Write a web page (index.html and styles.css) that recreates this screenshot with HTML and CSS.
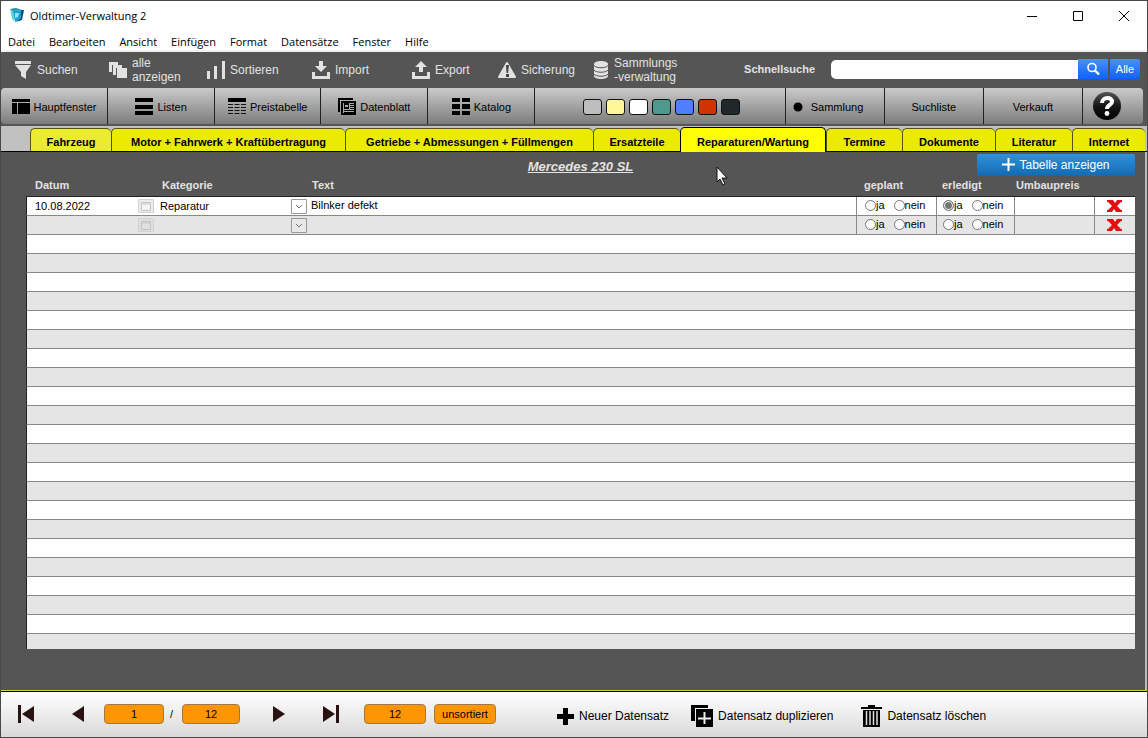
FILE: index.html
```html
<!DOCTYPE html>
<html lang="de">
<head>
<meta charset="utf-8">
<title>Oldtimer-Verwaltung 2</title>
<link rel="stylesheet" href="styles.css">
</head>
<body>
<div class="window">
  <header class="titlebar">
    <svg class="app-icon" width="16" height="16" viewBox="0 0 16 16"><path d="M1 1l2 10 2 2L5 3z" fill="#63d9dc"/><path d="M4 3l9-1-1 9-6 3z" fill="#18a0d8"/><path d="M1 1l6-1 6 2-9 1z" fill="#1d8f9c"/><path d="M12 2l3 0-2 10-6 2 5-4z" fill="#0a4c7c"/><path d="M6 5l4 0-1 4-3 1z" fill="#8fe9f8"/></svg>
    <span class="title">Oldtimer-Verwaltung 2</span>
    <div class="window-buttons">
      <button aria-label="Minimieren"><svg width="12" height="12" viewBox="0 0 12 12"><path d="M1 6.500h10" stroke="#000"/></svg></button>
      <button aria-label="Maximieren"><svg width="12" height="12" viewBox="0 0 12 12"><path d="M1.500 1.500h9v9h-9z" fill="none" stroke="#000"/></svg></button>
      <button aria-label="Schließen"><svg width="12" height="12" viewBox="0 0 12 12"><path d="M1 1l10 10M11 1L1 11" stroke="#000"/></svg></button>
    </div>
  </header>
  <nav class="menubar">
    <button>Datei</button><button>Bearbeiten</button><button>Ansicht</button><button>Einfügen</button><button>Format</button><button>Datensätze</button><button>Fenster</button><button>Hilfe</button>
  </nav>

  <div class="toolbar">
    <button class="tool"><svg width="18" height="18" viewBox="0 0 18 18" fill="#e2e2e2"><path d="M1 0h16v3H1zM1 4h16l-5 7v7l-5-3v-4z"/></svg><span>Suchen</span></button>
    <button class="tool"><svg width="18" height="18" viewBox="0 0 18 18" fill="#e2e2e2"><path d="M0 1h9v3H3v7H0zM4 4h9v3H7v7H4zM8 7h10v10H8z"/></svg><span>alle<br>anzeigen</span></button>
    <button class="tool"><svg width="18" height="18" viewBox="0 0 18 18" fill="#e2e2e2"><path d="M0 10h3v8H0zM7 5h3v13H7zM15 0h3v18h-3z"/></svg><span>Sortieren</span></button>
    <button class="tool"><svg width="18" height="18" viewBox="0 0 18 18" fill="#e2e2e2"><path d="M7 0h4v5h4l-6 6-6-6h4zM0 11h3v4h12v-4h3v7H0z"/></svg><span>Import</span></button>
    <button class="tool"><svg width="18" height="18" viewBox="0 0 18 18" fill="#e2e2e2"><path d="M7 11h4V6h4L9 0 3 6h4zM0 11h3v4h12v-4h3v7H0z"/></svg><span>Export</span></button>
    <button class="tool"><svg width="18" height="18" viewBox="0 0 18 18"><path d="M9 2l8 14H1z" fill="#e2e2e2" stroke="#e2e2e2" stroke-width="2" stroke-linejoin="round"/><path d="M8 4h3l-1 8H8.500zM8 13h3v3H8z" fill="#444"/></svg><span>Sicherung</span></button>
    <button class="tool stack"><svg width="16" height="18" viewBox="0 0 16 18"><path d="M1 3v12c0 4 14 4 14 0V3c0-4-14-4-14 0z" fill="#e2e2e2"/><path d="M1 4.500c2 3 12 3 14 0M1 9c2 3 12 3 14 0M1 13c2 3 12 3 14 0" fill="none" stroke="#555"/></svg><span>Sammlungs<br>-verwaltung</span></button>
    <form class="quicksearch">
      <label for="q">Schnellsuche</label>
      <input id="q" type="text">
      <button type="button" class="blue find" aria-label="Suchen"><svg width="14" height="14" viewBox="0 0 14 14" fill="none" stroke="#fff"><circle cx="6" cy="5.500" r="4" stroke-width="1.600"/><path d="M9 8.500l4 4" stroke-width="2.400"/></svg></button>
      <button type="button" class="blue all">Alle</button>
    </form>
  </div>

  <div class="views">
    <button><svg width="18" height="18" viewBox="0 0 18 18"><path d="M0 1h18v3H0zM0 5h5v11H0zM6 5h12v11H6z"/></svg>Hauptfenster</button>
    <button><svg width="18" height="18" viewBox="0 0 18 18"><path d="M0 0h18v4H0zM0 7h18v4H0zM0 13h18v4H0z"/></svg>Listen</button>
    <button><svg width="18" height="18" viewBox="0 0 18 18"><path d="M0 0h18v4H0z"/><path d="M0 6.500h18M0 9.500h18M0 12.500h18M0 15.500h18" stroke="#111" stroke-dasharray="5 1.500"/></svg>Preistabelle</button>
    <button><svg width="18" height="18" viewBox="0 0 18 18"><path d="M0 0h15v2H2v12H0z"/><path d="M4 4h13v12H4z" fill="#aaa" stroke="#000" stroke-width="2"/><path d="M6 5h5v6H6zM12 6h4v1h-4zM12 8h4v1h-4zM12 10h4v1h-4zM6 12h10v1H6zM6 14h10v1H6z"/><path d="M7 7h3v2H7z" fill="#aaa"/></svg>Datenblatt</button>
    <button><svg width="18" height="18" viewBox="0 0 18 18"><path d="M0 0h8v4H0zM10 0h8v4h-8zM0 6h8v5H0zM10 6h8v5h-8zM0 13h8v4H0zM10 13h8v4h-8z"/></svg>Katalog</button>
    <div class="swatches">
      <button class="silver" aria-label="Silber"></button><button class="cream" aria-label="Gelb"></button><button class="white" aria-label="Weiß"></button><button class="teal" aria-label="Türkis"></button><button class="azure" aria-label="Blau"></button><button class="red" aria-label="Rot"></button><button class="black" aria-label="Schwarz"></button>
    </div>
    <button class="active-list"><svg width="10" height="10" viewBox="0 0 10 10"><circle cx="5" cy="5" r="4.500"/></svg>Sammlung</button>
    <button>Suchliste</button>
    <button>Verkauft</button>
    <button class="help" aria-label="Hilfe"><svg width="28" height="28" viewBox="0 0 28 28"><defs><linearGradient id="ball" x2="0" y2="1"><stop offset="0" stop-color="#555"/><stop offset=".5" stop-color="#151515"/><stop offset="1" stop-color="#000"/></linearGradient></defs><circle cx="14" cy="14" r="14" fill="url(#ball)"/><path d="M9 11c0-7 11-6 10-1 0 3-5 3-5 7" fill="none" stroke="#fff" stroke-width="4"/><circle cx="14" cy="21.500" r="2.400" fill="#fff"/></svg></button>
  </div>

  <nav class="tabs">
    <button class="light">Fahrzeug</button>
    <button>Motor + Fahrwerk + Kraftübertragung</button>
    <button>Getriebe + Abmessungen + Füllmengen</button>
    <button>Ersatzteile</button>
    <button class="current">Reparaturen/Wartung</button>
    <button>Termine</button>
    <button>Dokumente</button>
    <button>Literatur</button>
    <button>Internet</button>
  </nav>

  <main class="content">
    <div class="heading">
      <h1>Mercedes 230 SL</h1>
      <button class="show-table"><svg width="13" height="13" viewBox="0 0 13 13"><path d="M6.500 0v13M0 6.500h13" stroke="#fff" stroke-width="2"/></svg>Tabelle anzeigen</button>
    </div>
    <table class="records">
      <colgroup><col class="c-date"><col class="c-cat"><col><col class="c-plan"><col class="c-done"><col class="c-price"><col class="c-del"></colgroup>
      <thead><tr><th>Datum</th><th>Kategorie</th><th>Text</th><th>geplant</th><th>erledigt</th><th colspan="2">Umbaupreis</th></tr></thead>
      <tbody>
        <tr>
          <td><div class="date"><input type="text" aria-label="Datum" value="10.08.2022"><button aria-label="Kalender"><svg width="16" height="14" viewBox="0 0 16 14"><path d="M.5.5h15v13H.5z" fill="#ececec" stroke="#d2d2d2"/><path d="M3.500 3.500h9v8h-9zM3 5h10" fill="#f4f4f4" stroke="#c4c4c4"/></svg></button></div></td>
          <td><div class="pick"><select aria-label="Kategorie"><option>Reparatur</option></select><svg width="16" height="15" viewBox="0 0 16 15"><path d="M.5.5h15v14H.5z" fill="#fff" stroke="#999"/><path d="M5 6l3 3 3-3" fill="none" stroke="#777"/></svg></div></td>
          <td><input type="text" aria-label="Text" value="Bilnker defekt"></td>
          <td class="line"><div class="choice"><label><input type="radio" name="p1">ja</label><label><input type="radio" name="p1">nein</label></div></td>
          <td class="line"><div class="choice"><label><input type="radio" name="d1" checked>ja</label><label><input type="radio" name="d1">nein</label></div></td>
          <td class="line"><input type="text" aria-label="Umbaupreis"></td>
          <td class="line del"><button aria-label="Löschen"><svg width="15" height="12" viewBox="0 0 15 12"><path d="M0 0h6l2 3 2-3h5v2h-1l-4 4 4 4h1v2H9L7 9l-2 3H0v-2h1l4-4-4-4H0z" fill="#e01010"/></svg></button></td>
        </tr>
        <tr>
          <td><div class="date"><input type="text" aria-label="Datum"><button aria-label="Kalender"><svg width="16" height="14" viewBox="0 0 16 14"><path d="M.5.5h15v13H.5z" fill="#dedede" stroke="#d2d2d2"/><path d="M3.500 3.500h9v8h-9zM3 5h10" fill="#e0e0e0" stroke="#c4c4c4"/></svg></button></div></td>
          <td><div class="pick"><select aria-label="Kategorie"><option></option></select><svg width="16" height="15" viewBox="0 0 16 15"><path d="M.5.5h15v14H.5z" fill="#e8e8e8" stroke="#999"/><path d="M5 6l3 3 3-3" fill="none" stroke="#777"/></svg></div></td>
          <td><input type="text" aria-label="Text"></td>
          <td class="line"><div class="choice"><label><input type="radio" name="p2">ja</label><label><input type="radio" name="p2">nein</label></div></td>
          <td class="line"><div class="choice"><label><input type="radio" name="d2">ja</label><label><input type="radio" name="d2">nein</label></div></td>
          <td class="line"><input type="text" aria-label="Umbaupreis"></td>
          <td class="line del"><button aria-label="Löschen"><svg width="15" height="12" viewBox="0 0 15 12"><path d="M0 0h6l2 3 2-3h5v2h-1l-4 4 4 4h1v2H9L7 9l-2 3H0v-2h1l4-4-4-4H0z" fill="#e01010"/></svg></button></td>
        </tr>
        <tr><td colspan="7"></td></tr><tr><td colspan="7"></td></tr><tr><td colspan="7"></td></tr><tr><td colspan="7"></td></tr>
        <tr><td colspan="7"></td></tr><tr><td colspan="7"></td></tr><tr><td colspan="7"></td></tr><tr><td colspan="7"></td></tr>
        <tr><td colspan="7"></td></tr><tr><td colspan="7"></td></tr><tr><td colspan="7"></td></tr><tr><td colspan="7"></td></tr>
        <tr><td colspan="7"></td></tr><tr><td colspan="7"></td></tr><tr><td colspan="7"></td></tr><tr><td colspan="7"></td></tr>
        <tr><td colspan="7"></td></tr><tr><td colspan="7"></td></tr><tr><td colspan="7"></td></tr><tr><td colspan="7"></td></tr>
        <tr><td colspan="7"></td></tr><tr class="cut"><td colspan="7"></td></tr>
      </tbody>
    </table>
  </main>

  <footer class="footer">
    <div class="pager">
      <button aria-label="Erster"><svg width="16" height="18" viewBox="0 0 16 18" fill="#2a1212"><path d="M0 0h3v18H0zM16 1v16L4 9z"/></svg></button>
      <button aria-label="Zurück"><svg width="16" height="18" viewBox="0 0 16 18" fill="#2a1212"><path d="M14 1v16L2 9z"/></svg></button>
      <div class="position"><input type="text" aria-label="Datensatz" value="1"><span>/</span><output>12</output></div>
      <button aria-label="Weiter"><svg width="16" height="18" viewBox="0 0 16 18" fill="#2a1212"><path d="M2 1v16l12-8z"/></svg></button>
      <button aria-label="Letzter"><svg width="16" height="18" viewBox="0 0 16 18" fill="#2a1212"><path d="M13 0h3v18h-3zM0 1v16l12-8z"/></svg></button>
    </div>
    <div class="status"><output>12</output><output>unsortiert</output></div>
    <div class="actions">
      <button><svg width="17" height="17" viewBox="0 0 17 17"><path d="M6 0h5v6h6v5h-6v6H6v-6H0V6h6z"/></svg>Neuer Datensatz</button>
      <button><svg width="22" height="22" viewBox="0 0 22 22"><path d="M0 0h17v3H4v13H0z"/><path d="M5 4h17v18H5z"/><path d="M13.500 7v12M7 13.500h13" stroke="#eee" stroke-width="2"/></svg>Datensatz duplizieren</button>
      <button><svg width="21" height="22" viewBox="0 0 21 22"><path d="M7 0h7v2h7v2H0V2h7zM2 5h17v17H2z"/><path d="M5.500 6v14M9 6v14M12.500 6v14M16 6v14" stroke="#ddd" stroke-width="1.500"/></svg>Datensatz löschen</button>
    </div>
  </footer>
  <svg class="pointer" width="13" height="20" viewBox="0 0 13 20"><path d="M1 1v15l3-3 3 6 2-1-3-6h5z" fill="#fff" stroke="#111"/></svg>
</div>
</body>
</html>
```
FILE: styles.css
```css
* { box-sizing: border-box; }
body {
  margin: 0;
  font: 11px/14px "Liberation Sans", Arial, sans-serif;
  color: #000;
}
button, input, select {
  font: inherit;
  color: inherit;
  background: none;
  border: 0;
  margin: 0;
  padding: 0;
}
svg { display: block; flex: none; }
.window {
  position: relative;
  display: flex;
  flex-direction: column;
  min-height: 100vh;
  border: 1px solid #484846;
  background: #555;
}

.titlebar {
  display: flex;
  align-items: center;
  gap: 5px;
  height: 29px;
  padding-left: 8px;
  background: #fff;
  font: 11px/16px "Open Sans", "Noto Sans", sans-serif;
}
.window-buttons { display: flex; margin-left: auto; }
.window-buttons button { display: grid; place-items: center; width: 46px; height: 28px; }
.menubar {
  display: flex;
  height: 22px;
  background: #fff;
  border-bottom: 2px solid #f0f0f0;
  font: 11px/20px "Open Sans", "Noto Sans", sans-serif;
}
.menubar button { padding: 2px 7px 0; }

.toolbar {
  display: grid;
  grid-template-columns: 95px 98px 105px 100px 86px 95px 100px 1fr;
  align-items: center;
  height: 36px;
  padding: 0 7px 2px 13px;
  color: #e2e2e2;
  font-size: 12px;
}
.tool { display: flex; align-items: center; gap: 5px; padding-top: 1px; text-align: left; }
.quicksearch { display: flex; align-items: center; justify-content: flex-end; }
.quicksearch label { margin-right: 16px; font-size: 11px; font-weight: bold; }
.quicksearch input {
  flex: 0 1 247px;
  min-width: 0;
  height: 19px;
  padding: 0 5px;
  background: #fff;
  border-radius: 5px 0 0 5px;
  color: #000;
}
.blue {
  display: grid;
  place-items: center;
  width: 30px;
  height: 20px;
  background: linear-gradient(#4a90fa, #0f62fe);
  color: #fff;
  font-size: 11px;
}
.all { margin-left: 2px; border-radius: 0 2px 2px 0; }

.views {
  display: grid;
  grid-template-columns: 107fr 107fr 106fr 107fr 107fr 250fr 99fr 99fr 99fr 60fr;
  height: 36px;
  margin: 0 4px 2px 0;
  border-radius: 4px;
  background: linear-gradient(#cacaca, #7c7c7c);
}
.views > button {
  display: flex;
  align-items: center;
  justify-content: center;
  gap: 4px;
  padding-top: 2px;
  border-right: 1px solid #222;
}
.views > .active-list { gap: 8px; justify-content: flex-start; padding-left: 7px; }
.views > .help { justify-content: flex-start; padding: 0 0 0 10px; border: 0; }
.swatches {
  display: flex;
  align-items: center;
  justify-content: center;
  gap: 4px;
  padding: 2px 0 0 2px;
  border-right: 1px solid #222;
}
.swatches button { width: 19px; height: 16px; border: 1px solid #111; border-radius: 3px; }
.silver { background: #bebebe; }
.cream { background: #fff799; }
.white { background: #fff; }
.teal { background: #4f988e; }
.azure { background: #4f7fff; }
.red { background: #d03200; }
.black { background: #22272a; }

.tabs {
  display: grid;
  grid-template-columns: 81fr 234fr 248fr 87fr 146fr 76fr 93fr 77fr 73fr;
  align-items: end;
  height: 26px;
  padding: 0 2px 0 29px;
  background: #c0c0c0;
  border-bottom: 1px solid #000;
}
.tabs button {
  height: 23px;
  padding-top: 3px;
  background: #ebeb00;
  border: 1px solid #55550a;
  border-width: 1px 0 0 1px;
  border-radius: 5px 5px 0 0;
  font-weight: bold;
  white-space: nowrap;
}
.tabs .light { background: #ebeb30; }
.tabs .current { height: 25px; margin-bottom: -1px; background: #ff0; border: 1px solid #000; border-bottom: 0; }

.content {
  flex: 1;
  padding: 1px 10px 0 25px;
  border-right: 2px solid #bbb;
}
.heading { display: grid; grid-template-columns: 1fr auto 1fr; align-items: center; height: 23px; }
.heading h1 {
  grid-column: 2;
  margin: 0;
  padding-top: 4px;
  color: #e2e2e2;
  font: italic bold 13px/16px "Liberation Sans", Arial, sans-serif;
  text-decoration: underline;
}
.show-table {
  display: flex;
  align-items: center;
  justify-content: center;
  justify-self: end;
  gap: 4px;
  width: 158px;
  height: 22px;
  border-radius: 2px;
  background: linear-gradient(#2e93e0, #1469ae);
  color: #fff;
  font-size: 12px;
}

.records { width: 100%; table-layout: fixed; border-spacing: 0; }
.c-date { width: 134px; }
.c-cat { width: 147px; }
.c-plan { width: 80px; }
.c-done { width: 78px; }
.c-price { width: 80px; }
.c-del { width: 41px; }
.records th {
  height: 21px;
  padding: 0 0 2px 2px;
  border-bottom: 1px solid #222;
  color: #e2e2e2;
  text-align: left;
}
.records th:first-child { padding-left: 9px; }
.records th:nth-child(3) { padding-left: 5px; }
.records th:nth-child(4) { padding-left: 8px; }
.records th:nth-child(5) { padding-left: 6px; }
.records td {
  height: 19px;
  padding: 0;
  background: #fff;
  border-bottom: 1px solid #888;
}
.records tr:nth-child(even) td { background: #e5e5e5; }
.records td:first-child { border-left: 1px solid #222; }
.records .cut td { height: 15px; border-bottom: 0; }
.records td.line { border-left: 1px solid #888; }
.records td > input { display: block; width: 100%; padding: 0 0 2px 4px; height: 18px; }
.date { display: grid; grid-template-columns: 1fr 16px; align-items: center; height: 18px; padding: 0 6px 0 8px; }
.date input { width: 100%; }
.pick { display: grid; grid-template-columns: 1fr 16px; align-items: center; height: 18px; }
.pick select { grid-area: 1 / 1 / 2 / 3; appearance: none; }
.pick svg { grid-area: 1 / 2; pointer-events: none; }
.choice { display: flex; gap: 9px; height: 18px; padding: 0 0 2px 8px; }
.line + .line .choice { padding-left: 6px; }
.choice label { display: flex; align-items: center; }
.choice input { appearance: none; width: 11px; height: 11px; border: 1px solid #777; border-radius: 50%; background: #fff; }
.choice input:checked { background: #777; box-shadow: inset 0 0 0 1px #fff; }
.del button { display: grid; place-items: center; width: 100%; height: 18px; }

.footer {
  display: flex;
  align-items: center;
  height: 47px;
  padding: 0 17px;
  border-top: 1px solid #d8d020;
  background: linear-gradient(#000 1px, #fff 1px, #d9d9d9);
}
.pager { display: flex; align-items: center; gap: 36px; }
.position { display: flex; align-items: center; margin: 0 -5px 0 -18px; }
.position span { width: 18px; padding-right: 3px; text-align: center; }
.position input, .footer output {
  width: 60px;
  height: 20px;
  border: 1px solid #a07840;
  border-radius: 4px;
  background: #ff9500;
  line-height: 18px;
  text-align: center;
}
.footer .position output { width: 58px; }
.status { display: flex; gap: 8px; margin-left: 25px; }
.footer .status output { width: 62px; }
.actions { display: flex; gap: 22px; margin-left: 61px; padding-top: 4px; font-size: 12px; }
.actions button { display: flex; align-items: center; gap: 5px; white-space: nowrap; }
.actions button:last-child { margin-left: 6px; }
.pointer { position: absolute; left: 715px; top: 165px; }
```
